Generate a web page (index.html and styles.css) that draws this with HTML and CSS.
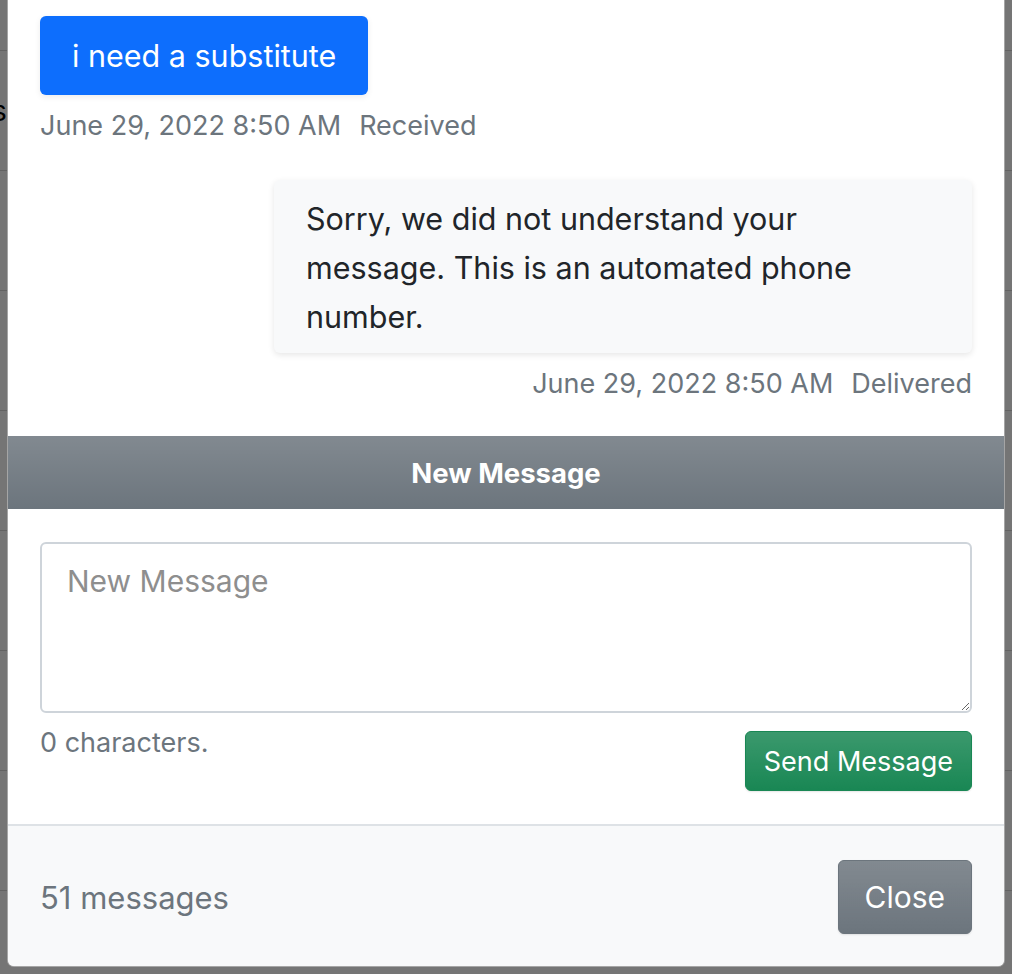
FILE: index.html
```html
<!DOCTYPE html>
<html lang="en">
<head>
<meta charset="utf-8">
<title>Messages</title>
<link rel="stylesheet" href="styles.css">
</head>
<body>
<div class="page">
  <div class="row first"></div>
  <div class="row"><span class="cell">s</span></div>
  <div class="row"></div>
  <div class="row"></div>
  <div class="row"></div>
  <div class="row"></div>
  <div class="row"></div>
  <div class="row"></div>
  <div class="row"></div>
</div>
<div class="backdrop"></div>
<div class="modal">
  <div class="chat">
    <div class="msg incoming">
      <div class="bubble bubble-blue">i need a substitute</div>
      <div class="meta"><span>June 29, 2022 8:50 AM</span><span>Received</span></div>
    </div>
    <div class="msg outgoing">
      <div class="bubble bubble-gray">Sorry, we did not understand your message. This is an automated phone number.</div>
      <div class="meta"><span>June 29, 2022 8:50 AM</span><span>Delivered</span></div>
    </div>
  </div>
  <div class="section-header">New Message</div>
  <div class="compose">
    <textarea class="input" placeholder="New Message"></textarea>
    <div class="compose-row">
      <span class="count">0 characters.</span>
      <button class="btn btn-success" type="button">Send Message</button>
    </div>
  </div>
  <div class="footer">
    <span class="total">51 messages</span>
    <button class="btn btn-secondary" type="button">Close</button>
  </div>
</div>
</body>
</html>
```
FILE: styles.css
```css
* { box-sizing: border-box; }
html, body { margin: 0; padding: 0; }
body {
  width: 1012px;
  height: 974px;
  overflow: hidden;
  position: relative;
  background: #fff;
  font-family: Inter, "Liberation Sans", sans-serif;
  color: #212529;
}
.page { display: flex; flex-direction: column; }
.row {
  height: 120px;
  border-bottom: 1px solid #d6d6d6;
  display: flex;
  align-items: center;
  font-size: 28px;
  color: #000;
}
.row.first { height: 51px; }
.cell { margin-left: -8px; }
.backdrop {
  position: absolute;
  inset: 0;
  background: rgba(0, 0, 0, 0.54);
}
.modal {
  position: absolute;
  left: 7px;
  top: 0;
  width: 998px;
  background: #fff;
  border: 1px solid rgba(0, 0, 0, 0.35);
  border-top: 0;
  border-radius: 0 0 7px 7px;
  overflow: hidden;
  display: flex;
  flex-direction: column;
}
.chat {
  padding: 16px 32px 34px;
  display: flex;
  flex-direction: column;
  gap: 36px;
}
.msg { display: flex; flex-direction: column; }
.msg.incoming { align-items: flex-start; }
.msg.outgoing { align-items: flex-end; }
.bubble {
  border-radius: 6px;
  line-height: 49px;
}
.bubble-blue {
  background: #0d6efd;
  color: #fff;
  font-size: 30.5px;
  padding: 15px 32px;
  box-shadow: 0 2px 6px rgba(0, 0, 0, 0.08);
}
.bubble-gray {
  background: #f8f9fa;
  color: #212529;
  font-size: 30.5px;
  padding: 14px 32px 12px;
  width: 698px;
  box-shadow: 0 2px 6px rgba(0, 0, 0, 0.1);
}
.meta {
  margin-top: 13px;
  height: 36px;
  font-size: 27px;
  line-height: 36px;
  color: #6c757d;
  display: flex;
  gap: 18px;
}
.section-header {
  height: 73px;
  display: flex;
  align-items: center;
  justify-content: center;
  color: #fff;
  font-weight: 700;
  font-size: 27.5px;
  background: #6c757d linear-gradient(180deg, rgba(255, 255, 255, 0.15), rgba(255, 255, 255, 0));
}
.compose {
  padding: 33px 32px 33px;
  display: flex;
  flex-direction: column;
}
.input {
  display: block;
  width: 100%;
  height: 171px;
  border: 2px solid #ced4da;
  border-radius: 6px;
  padding: 16px 25px;
  font-family: inherit;
  font-size: 30px;
  line-height: 42px;
  color: #212529;
  resize: vertical;
  background: #fff;
}
.input::placeholder { color: #8e8e8e; }
.compose-row {
  margin-top: 12px;
  display: flex;
  justify-content: space-between;
  align-items: flex-start;
}
.count {
  font-size: 27px;
  line-height: 36px;
  color: #6c757d;
}
.btn {
  font-family: inherit;
  color: #fff;
  border-radius: 6px;
  cursor: pointer;
}
.btn-success {
  margin-top: 6px;
  height: 60px;
  padding: 0 18px;
  font-size: 27px;
  background: #198754 linear-gradient(180deg, rgba(255, 255, 255, 0.15), rgba(255, 255, 255, 0));
  border: 1px solid #198754;
  box-shadow: 0 1px 2px rgba(0, 0, 0, 0.1);
}
.footer {
  border-top: 2px solid #dee2e6;
  background: #f8f9fa;
  padding: 34px 32px 32px;
  display: flex;
  align-items: center;
  justify-content: space-between;
}
.total {
  font-size: 31px;
  color: #6c757d;
}
.btn-secondary {
  height: 74px;
  padding: 0 26px;
  font-size: 30px;
  background: #6c757d linear-gradient(180deg, rgba(255, 255, 255, 0.15), rgba(255, 255, 255, 0));
  border: 1px solid #6c757d;
  box-shadow: 0 1px 2px rgba(0, 0, 0, 0.1);
}
```
